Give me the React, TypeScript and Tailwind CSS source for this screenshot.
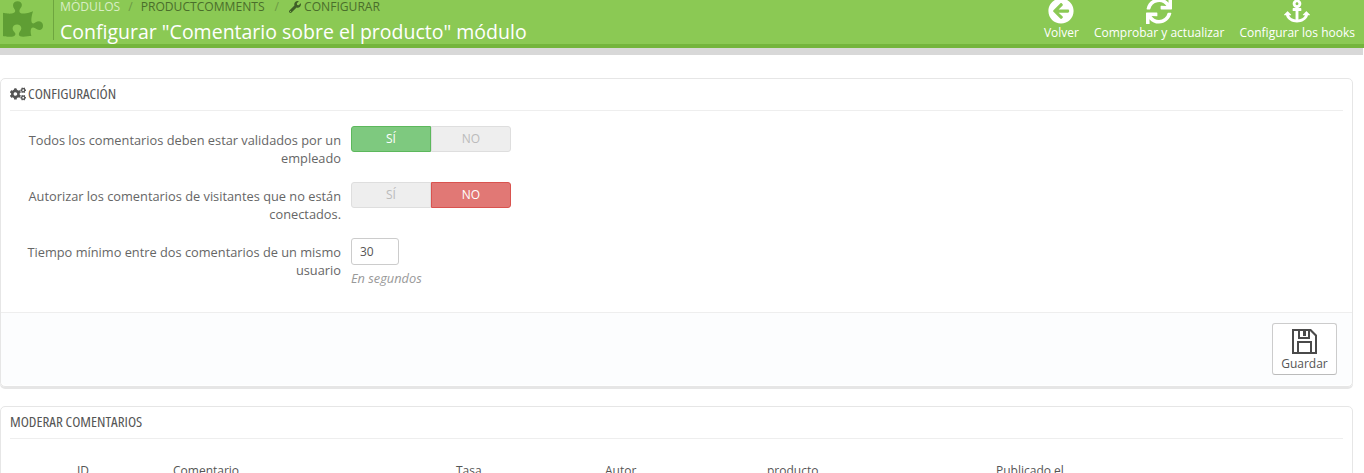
import { FaPuzzlePiece, FaArrowCircleLeft, FaSync, FaAnchor, FaWrench, FaCogs } from "react-icons/fa";

function Toggle({ on }: { on: boolean }) {
  return (
    <div className="flex h-[26px] w-[160px] text-[12px] uppercase leading-[24px]">
      <div
        className={
          on
            ? "w-[80px] rounded-l-[3px] border border-[#5cb85c] bg-[#7ec97f] text-center font-medium text-white"
            : "w-[80px] rounded-l-[3px] border border-[#dedede] bg-[#eeeeee] text-center text-[#bbbbbb]"
        }
      >
        Sí
      </div>
      <div
        className={
          on
            ? "w-[80px] rounded-r-[3px] border border-[#dedede] bg-[#eeeeee] text-center text-[#bbbbbb]"
            : "w-[80px] rounded-r-[3px] border border-[#d9534f] bg-[#e17875] text-center font-medium text-white"
        }
      >
        No
      </div>
    </div>
  );
}

function HeaderAction({ icon, label }: { icon: React.ReactNode; label: string }) {
  return (
    <div className="flex flex-col items-center">
      <div className="flex h-[27px] items-start justify-center text-[26px] leading-none text-white">{icon}</div>
      <span className="text-[12px] leading-[16px] text-white">{label}</span>
    </div>
  );
}

function FormRow({ label, children, className }: { label: string; children: React.ReactNode; className?: string }) {
  return (
    <div className={"flex " + (className ?? "")}>
      <label className="w-[340px] pl-[20px] pt-[5px] text-right text-[12.8px] leading-[18px] text-[#666666]">{label}</label>
      <div className="ml-[10px]">{children}</div>
    </div>
  );
}

function SaveIcon() {
  return (
    <svg viewBox="0 0 25 25" className="h-[25px] w-[25px] text-[#4a4a4a]" fill="currentColor">
      <path d="M0 0h19l6 6v19H0V0zm2 2v21h3V12h15v11h3V7l-5-5v8H6V2H2zm6 0v6h8V2h-2v5h-3V2H8zM7 14v9h11v-9H7z" fillRule="evenodd" />
    </svg>
  );
}

export default function App() {
  return (
    <div className="h-[473px] overflow-hidden bg-white font-['Open_Sans',sans-serif]">
      <header className="h-[48px] overflow-hidden border-b-4 border-[#74b53c] bg-[#8bc954]">
        <div className="flex items-start justify-between">
          <div className="flex">
            <div className="mt-[-2px] flex h-[42px] w-[54px] items-center justify-start border-r border-[#6ea53f] pl-[3px] text-[#5f9e34]">
              <FaPuzzlePiece className="text-[40px]" />
            </div>
            <div className="pl-[6px]">
              <div className="mt-[-2px] flex h-[18px] items-center text-[12.1px] uppercase leading-[18px] text-[#4a6e2b]">
                <span className="text-[#d9eec5]">Módulos</span>
                <span className="mx-[8px] text-[#6b9a45]">/</span>
                <span>productcomments</span>
                <span className="mx-[10px] text-[#6b9a45]">/</span>
                <FaWrench className="mr-[3px] text-[12px] text-[#3f5f27]" />
                <span>Configurar</span>
              </div>
              <h1 className="mt-[4px] text-[19.5px] leading-[24px] text-white">Configurar "Comentario sobre el producto" módulo</h1>
            </div>
          </div>
          <div className="mt-[-2px] flex gap-[15px] pr-[9px]">
            <HeaderAction icon={<FaArrowCircleLeft />} label="Volver" />
            <HeaderAction icon={<FaSync />} label="Comprobar y actualizar" />
            <HeaderAction icon={<FaAnchor />} label="Configurar los hooks" />
          </div>
        </div>
      </header>
      <div className="mr-[1px] h-[7px] bg-[#d8d8d8]" />

      <main className="mr-[11px] pt-[23px]">
        <section className="h-[309px] rounded-[5px] border border-[#e6e6e6] shadow-[0_2px_0_#e6e6e6]">
          <div className="mx-[9px] flex h-[32px] items-center gap-[2px] border-b border-[#eeeeee] pb-[2px] text-[15px] uppercase text-[#555555]">
            <FaCogs className="text-[16px] text-[#555555]" />
            <span className="font-stretch-condensed whitespace-nowrap">Configuración</span>
          </div>
          <div className="h-[201px] pt-[15px]">
            <FormRow label="Todos los comentarios deben estar validados por un empleado">
              <Toggle on />
            </FormRow>
            <FormRow label="Autorizar los comentarios de visitantes que no están conectados." className="mt-[15px]">
              <Toggle on={false} />
            </FormRow>
            <FormRow label="Tiempo mínimo entre dos comentarios de un mismo usuario" className="mt-[15px]">
              <div className="flex h-[27px] w-[48px] items-center rounded-[3px] border border-[#cccccc] bg-white pl-[8px] text-[12px] text-[#555555]">30</div>
              <p className="mt-[4px] text-[12.8px] italic leading-[18px] text-[#999999]">En segundos</p>
            </FormRow>
          </div>
          <div className="flex h-[73px] justify-end rounded-b-[5px] border-t border-[#eeeeee] bg-[#fcfdfe] pr-[15px] pt-[10px]">
            <button className="flex h-[52px] w-[65px] flex-col items-center rounded-[3px] border border-[#cccccc] border-b-[#bbbbbb] bg-white pt-[5px] text-[12px] leading-[16px] text-[#555555]">
              <SaveIcon />
              <span className="mt-[2px]">Guardar</span>
            </button>
          </div>
        </section>

        <section className="mt-[19px] rounded-[5px] border border-[#e6e6e6]">
          <div className="mx-[9px] flex h-[32px] items-center border-b border-[#eeeeee] pb-[2px] text-[15px] uppercase text-[#555555]">
            <span className="font-stretch-condensed whitespace-nowrap">Moderar comentarios</span>
          </div>
          <div className="grid grid-cols-[172px_283px_149px_162px_229px_1fr] pt-[23px] text-[12px] leading-[18px] text-[#555555]">
            <span className="pl-[76px]">ID</span>
            <span>Comentario</span>
            <span>Tasa</span>
            <span>Autor</span>
            <span>producto</span>
            <span>Publicado el</span>
          </div>
        </section>
      </main>
    </div>
  );
}
